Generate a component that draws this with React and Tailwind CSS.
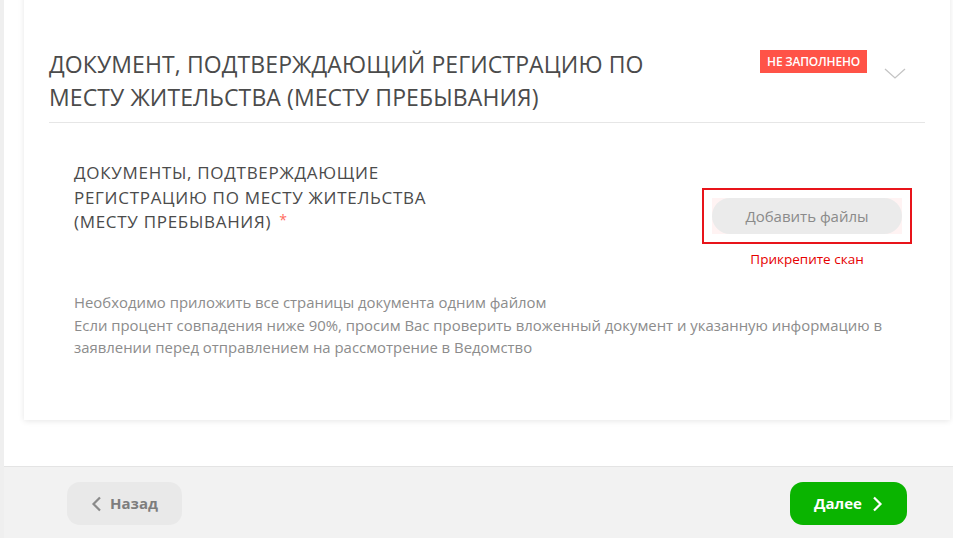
import React from "react";

export default function App() {
  return (
    <div className="flex h-[538px] w-[953px] overflow-hidden bg-[#efefef] font-['Open_Sans',sans-serif]">
      <div className="ml-[4px] flex flex-1 flex-col">
        <div className="flex h-[466px] flex-col overflow-hidden bg-white pl-[20px] pr-[3px]">
          <div className="-mt-[10px] flex flex-col bg-white px-[25px] pt-[58px] pb-[61px] shadow-[0_1px_6px_rgba(0,0,0,0.10)]">
            <div className="relative flex items-start border-b border-[#e6e6e6] pb-[8px]">
              <h2 className="text-[23px] font-normal uppercase leading-[33px] tracking-[0.1px] text-[#4b4b4b]">
                Документ, подтверждающий регистрацию по
                <br />
                месту жительства (месту пребывания)
              </h2>
              <div className="ml-auto mt-[2px] flex items-start">
                <span className="flex h-[23px] items-center bg-[#ff5347] px-[7px] text-[12px] font-semibold uppercase tracking-[-0.2px] text-white">
                  Не заполнено
                </span>
                <svg className="ml-[17px] mt-[18px]" width="22" height="12" viewBox="0 0 22 12" fill="none">
                  <path d="M1 1 L11 10 L21 1" stroke="#c4c4c4" strokeWidth="1.3" />
                </svg>
                <span className="w-[19px]" />
              </div>
            </div>

            <div className="mt-[38px] flex items-start pl-[25px] pr-[13px]">
              <div className="text-[17px] uppercase leading-[24.5px] tracking-[0.7px] text-[#4b4b4b]">
                Документы, подтверждающие
                <br />
                регистрацию по месту жительства
                <br />
                (месту пребывания)
                <span className="relative -top-[3px] ml-[8px] text-[14px] text-[#ff6b5e]">*</span>
              </div>
              <div className="ml-auto mt-[27px] flex flex-col items-center">
                <div className="border-2 border-[#e8141a] px-[8px] py-[8px]">
                  <div className="bg-[#fff3f3]">
                    <button className="flex h-[36px] w-[190px] items-center justify-center rounded-full bg-[#ebebeb] text-[15px] text-[#8a8a8a]">
                      Добавить файлы
                    </button>
                  </div>
                </div>
                <div className="mt-[6px] text-[13.5px] leading-[18px] text-[#e60000]">Прикрепите скан</div>
              </div>
            </div>

            <div className="mt-[23px] pl-[25px] text-[14.9px] leading-[22.5px] text-[#8c8c8c]">
              <p>Необходимо приложить все страницы документа одним файлом</p>
              <p>
                Если процент совпадения ниже 90%, просим Вас проверить вложенный документ и указанную информацию в
                <br />
                заявлении перед отправлением на рассмотрение в Ведомство
              </p>
            </div>
          </div>
        </div>

        <div className="flex flex-1 items-start justify-between border-t border-[#e4e4e4] bg-[#f2f2f2] pl-[63px] pr-[46px] pt-[15px]">
          <button className="flex h-[43px] w-[115px] items-center justify-center gap-[8px] rounded-[13px] bg-[#e9e9e9] text-[15px] font-bold text-[#7d7d7d]">
            <svg width="11" height="16" viewBox="0 0 11 16" fill="none">
              <path d="M9 1.5 L2.5 8 L9 14.5" stroke="#8a8a8a" strokeWidth="2.2" />
            </svg>
            Назад
          </button>
          <button className="flex h-[43px] w-[117px] items-center justify-center gap-[10px] rounded-[13px] bg-[#0ab400] text-[15px] font-bold text-white">
            Далее
            <svg width="11" height="16" viewBox="0 0 11 16" fill="none">
              <path d="M2 1.5 L8.5 8 L2 14.5" stroke="#ffffff" strokeWidth="2.2" />
            </svg>
          </button>
        </div>
      </div>
    </div>
  );
}
